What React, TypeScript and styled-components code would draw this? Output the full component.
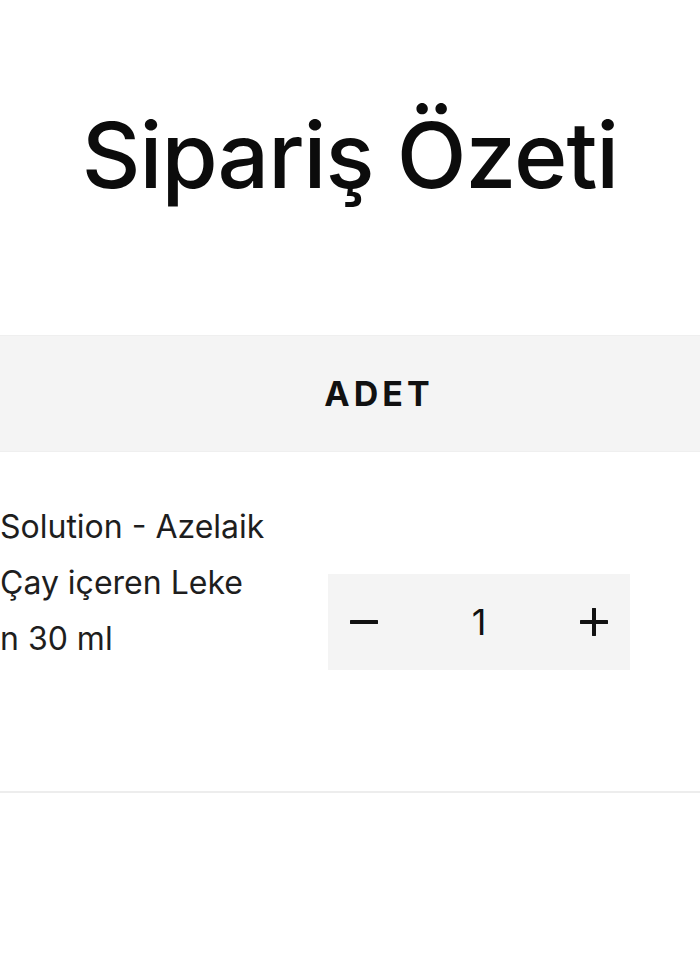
import React from "react";
import styled, { createGlobalStyle } from "styled-components";

const GlobalStyle = createGlobalStyle`
  html, body {
    margin: 0;
    padding: 0;
    background: #ffffff;
    overflow: hidden;
  }
  body {
    font-family: Inter, "Noto Sans", "Liberation Sans", sans-serif;
    color: #111111;
  }
  * { box-sizing: border-box; }
`;

const Page = styled.main`
  width: 700px;
  min-height: 980px;
  display: flex;
  flex-direction: column;
  overflow: hidden;
`;

const Title = styled.h1`
  margin: 0;
  padding-top: 110px;
  text-align: center;
  font-size: 91px;
  line-height: 1;
  font-weight: 550;
  letter-spacing: -1px;
  color: #0c0c0c;
`;

const Table = styled.section`
  margin-top: 134px;
  display: flex;
  flex-direction: column;
`;

const HeaderRow = styled.div`
  height: 117px;
  background: #f4f4f4;
  border-top: 1px solid #efefef;
  border-bottom: 1px solid #efefef;
  display: grid;
  grid-template-columns: 290px 178px 1fr;
  align-items: center;
`;

const HeaderCell = styled.div`
  text-align: center;
  font-size: 34px;
  font-weight: 700;
  letter-spacing: 4px;
  color: #111111;
`;

const BodyRow = styled.div`
  height: 341px;
  display: grid;
  grid-template-columns: 328px 302px 1fr;
  align-items: start;
  border-bottom: 2px solid #ededed;
`;

const ProductName = styled.div`
  padding-top: 47px;
  font-size: 32px;
  line-height: 56px;
  font-weight: 400;
  color: #1e1e1e;
  white-space: nowrap;
`;

const Quantity = styled.div`
  margin-top: 122px;
  height: 96px;
  background: #f4f4f4;
  display: grid;
  grid-template-columns: 72px 1fr 72px;
  align-items: center;
`;

const QtyButton = styled.button`
  border: 0;
  background: transparent;
  padding: 0;
  height: 96px;
  display: flex;
  align-items: center;
  justify-content: center;
  color: #111111;
  cursor: pointer;
`;

const QtyValue = styled.span`
  text-align: center;
  font-size: 36px;
  font-weight: 400;
  color: #111111;
`;

const Icon = ({ plus }: { plus?: boolean }) => (
  <svg width="28" height="28" viewBox="0 0 28 28" fill="none">
    <line x1="1" y1="14" x2="27" y2="14" stroke="currentColor" strokeWidth="4" strokeLinecap="round" />
    {plus && <line x1="14" y1="1" x2="14" y2="27" stroke="currentColor" strokeWidth="4" strokeLinecap="round" />}
  </svg>
);

export default function App() {
  return (
    <>
      <GlobalStyle />
      <Page>
        <Title>Sipariş Özeti</Title>
        <Table>
          <HeaderRow>
            <span />
            <HeaderCell>ADET</HeaderCell>
            <span />
          </HeaderRow>
          <BodyRow>
            <ProductName>
              Solution - Azelaik
              <br />
              Çay içeren Leke
              <br />
              n 30 ml
            </ProductName>
            <Quantity>
              <QtyButton aria-label="Azalt">
                <Icon />
              </QtyButton>
              <QtyValue>1</QtyValue>
              <QtyButton aria-label="Arttır">
                <Icon plus />
              </QtyButton>
            </Quantity>
            <span />
          </BodyRow>
        </Table>
      </Page>
    </>
  );
}
